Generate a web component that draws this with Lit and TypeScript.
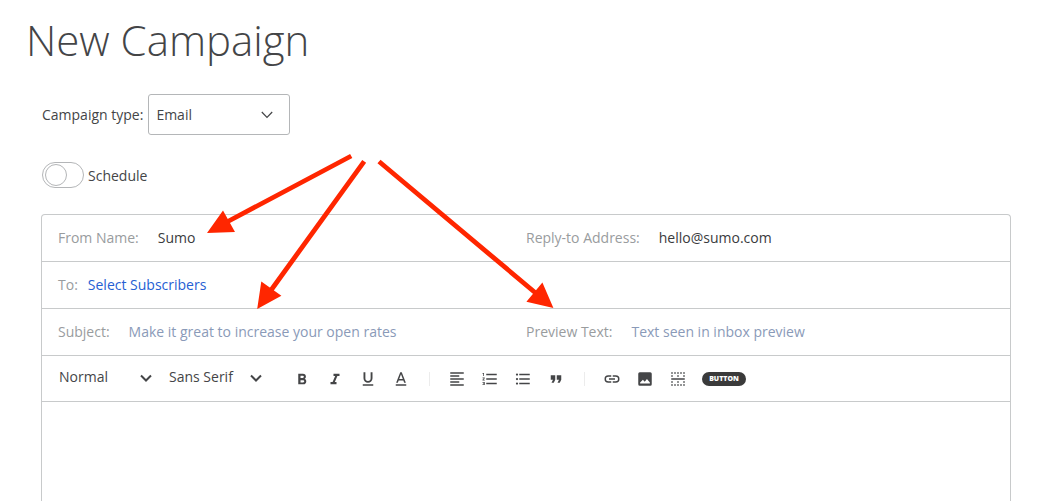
import { LitElement, html, svg, css } from "lit";
import { customElement, state } from "lit/decorators.js";

const glyphs: Record<string, unknown> = {
  Bold: svg`<path d="M15.6 11.8c1-.7 1.6-1.8 1.6-2.8a4 4 0 0 0-4-4H7v14h7c2.1 0 3.7-1.7 3.7-3.8 0-1.500-.8-2.800-2.100-3.400zM10 7.500h3a1.500 1.500 0 0 1 0 3h-3v-3zm3.500 9H10v-3h3.500a1.500 1.500 0 0 1 0 3z"/>`,
  Italic: svg`<path d="M10 5v3h2.200l-3.400 8H6v3h8v-3h-2.200l3.400-8H18V5z"/>`,
  Underline: svg`<path d="M12 17a6 6 0 0 0 6-6V3h-2.500v8a3.500 3.500 0 0 1-7 0V3H6v8a6 6 0 0 0 6 6zm-7 2v2h14v-2H5z"/>`,
  "Text colour": svg`<path d="M5 19v2h14v-2H5z"/><path d="M11 3 5.500 17h2.250l1.120-3h6.250l1.120 3h2.250L13 3h-2zm-1.380 9L12 5.670 14.380 12H9.620z"/>`,
  "Align left": svg`<path d="M15 15H3v2h12v-2zm0-8H3v2h12V7zM3 13h18v-2H3v2zm0 8h18v-2H3v2zM3 3v2h18V3H3z"/>`,
  "Numbered list": svg`<path d="M2 17h2v.5H3v1h1v.5H2v1h3v-4H2v1zm1-9h1V4H2v1h1v3zm-1 3h1.800L2 13.100v.9h3v-1H3.200L5 10.900V10H2v1zm5-6v2h14V5H7zm0 14h14v-2H7v2zm0-6h14v-2H7v2z"/>`,
  "Bulleted list": svg`<path d="M4 10.500a1.500 1.500 0 1 0 0 3 1.500 1.500 0 0 0 0-3zm0-6a1.500 1.500 0 1 0 0 3 1.500 1.500 0 0 0 0-3zm0 12a1.500 1.500 0 1 0 0 3 1.500 1.500 0 0 0 0-3zM7 19h14v-2H7v2zm0-6h14v-2H7v2zm0-8v2h14V5H7z"/>`,
  Quote: svg`<path d="M6 17h3l2-4V7H5v6h3zm8 0h3l2-4V7h-6v6h3z"/>`,
  Link: svg`<path d="M3.900 12A3.100 3.100 0 0 1 7 8.900h4V7H7a5 5 0 0 0 0 10h4v-1.900H7A3.100 3.100 0 0 1 3.900 12zM8 13h8v-2H8v2zm9-6h-4v1.900h4a3.100 3.100 0 0 1 0 6.200h-4V17h4a5 5 0 0 0 0-10z"/>`,
  Image: svg`<path fill-rule="evenodd" d="M5 3h14a2 2 0 0 1 2 2v14a2 2 0 0 1-2 2H5a2 2 0 0 1-2-2V5a2 2 0 0 1 2-2zM5.500 18h13v-1.500L14.600 12l-3 3.500L9.200 13l-3.700 3.700z"/>`,
  Divider: svg`<path d="M3 11h18v2H3z"/><path d="M3 4h18M3 20h18" fill="none" stroke="currentColor" stroke-width="2" stroke-dasharray="2 2"/><path d="M3 8h18M3 16h18" fill="none" stroke="currentColor" stroke-width="2" stroke-dasharray="2 6"/>`,
};

const groups = [
  ["Bold", "Italic", "Underline", "Text colour"],
  ["Align left", "Numbered list", "Bulleted list", "Quote"],
  ["Link", "Image", "Divider"],
];

@customElement("app-root")
export class AppRoot extends LitElement {
  @state() private scheduled = false;

  static styles = css`
    * { box-sizing: border-box; }
    :host {
      position: relative;
      display: flex;
      flex-direction: column;
      height: 100vh;
      overflow: hidden;
      background: #fff;
      color: #444547;
      font: 14px/20px "Open Sans", sans-serif;
    }
    h1 {
      margin: 0;
      padding: 12px 26px 26px;
      font-size: 42px;
      font-weight: 300;
      line-height: 56px;
    }
    input, select, button { font: inherit; color: inherit; }
    .option { display: flex; align-items: center; gap: 5px; padding: 0 42px; }
    .schedule { gap: 4px; padding-top: 27px; padding-bottom: 26px; }
    .schedule label { line-height: 22px; padding-top: 2px; }
    .pick { display: grid; align-items: center; }
    .pick select, .pick svg { grid-area: 1 / 1; }
    .pick select {
      appearance: none;
      width: 100%;
      margin: 0;
      padding: 0;
      border: 0;
      background: none;
    }
    .pick svg {
      justify-self: end;
      pointer-events: none;
      fill: none;
      stroke: currentColor;
    }
    .boxed { width: 142px; }
    .boxed select {
      height: 41px;
      padding: 0 7px;
      border: 1px solid #b4b6b8;
      border-radius: 3px;
    }
    .boxed svg { margin-right: 16px; }
    .toggle {
      appearance: none;
      display: flex;
      align-items: center;
      width: 42px;
      height: 26px;
      margin: 0;
      padding: 0 2px;
      border: 1px solid #b4b6b8;
      border-radius: 13px;
    }
    .toggle::before {
      content: "";
      width: 20px;
      height: 20px;
      border: 1px solid #b4b6b8;
      border-radius: 50%;
    }
    .toggle:checked { justify-content: flex-end; background: #dbe7fb; }
    .composer {
      flex: 1;
      display: flex;
      flex-direction: column;
      margin: 0 39px 0 41px;
      border: 1px solid #c8cacb;
      border-bottom: 0;
      border-radius: 4px 4px 0 0;
    }
    .row {
      display: grid;
      grid-template-columns: 1fr 1fr;
      align-items: center;
      height: 47px;
      padding: 0 16px;
      border-bottom: 1px solid #c8cacb;
    }
    .field { display: flex; gap: 19px; color: #999c9e; }
    .near { gap: 10px; }
    .field input {
      flex: 1;
      min-width: 0;
      padding: 0;
      border: 0;
      color: #3a3b3d;
      background: none;
      outline: none;
    }
    .field input::placeholder { color: #8a9ab8; opacity: 1; }
    a { color: #2660d3; text-decoration: none; }
    .bar {
      display: flex;
      align-items: center;
      height: 46px;
      padding: 0 17px;
      border-bottom: 1px solid #c8cacb;
    }
    .bar .pick { width: 94px; margin-right: 16px; padding-bottom: 4px; }
    .bar .pick svg { margin-top: 2px; }
    .bar .font { margin-right: 30px; }
    .group { display: flex; gap: 15px; }
    .group + .group { margin-left: 19px; padding-left: 19px; background: linear-gradient(#ececec, #ececec) left / 1px 14px no-repeat; }
    .tool {
      display: flex;
      width: 18px;
      height: 18px;
      padding: 0;
      border: 0;
      background: none;
    }
    .tool svg { width: 18px; height: 18px; fill: currentColor; }
    .pill {
      width: 44px;
      height: 14px;
      margin-left: 15px;
      padding: 0;
      border: 0;
      border-radius: 7px;
      background: #3a3a3a;
      color: #fff;
      font-size: 7px;
      font-weight: 800;
      line-height: 14px;
    }
    .body { flex: 1; min-height: 80px; outline: none; padding: 12px 16px; }
    .arrows {
      position: absolute;
      top: 0;
      left: 0;
      pointer-events: none;
      fill: #ff2600;
      stroke: #ff2600;
    }
  `;

  private thick() {
    return html`<svg width="14" height="10" viewBox="0 0 14 10" stroke-width="2" aria-hidden="true"><path d="M2 2.500 7 7.500 12 2.500"/></svg>`;
  }

  render() {
    return html`
      <h1>New Campaign</h1>
      <div class="option">
        <label for="type">Campaign type:</label>
        <span class="pick boxed">
          <select id="type"><option>Email</option></select>
          <svg width="14" height="10" viewBox="0 0 14 10" stroke-width="1.200" aria-hidden="true"><path d="M1.800 2 7 7.500 12.200 2"/></svg>
        </span>
      </div>
      <div class="option schedule">
        <input id="schedule" class="toggle" type="checkbox" role="switch" .checked=${this.scheduled}
          @change=${(e: Event) => (this.scheduled = (e.target as HTMLInputElement).checked)} />
        <label for="schedule">Schedule</label>
      </div>
      <div class="composer">
        <div class="row">
          <div class="field"><label for="from">From Name:</label><input id="from" value="Sumo" /></div>
          <div class="field"><label for="reply">Reply-to Address:</label><input id="reply" type="email" value="hello@sumo.com" /></div>
        </div>
        <div class="row">
          <div class="field near"><span>To:</span><a href="#subscribers">Select Subscribers</a></div>
        </div>
        <div class="row">
          <div class="field"><label for="subject">Subject:</label><input id="subject" placeholder="Make it great to increase your open rates" /></div>
          <div class="field"><label for="preview">Preview Text:</label><input id="preview" placeholder="Text seen in inbox preview" /></div>
        </div>
        <div class="bar">
          <span class="pick"><select aria-label="Text size"><option>Normal</option></select>${this.thick()}</span>
          <span class="pick font"><select aria-label="Font"><option>Sans Serif</option></select>${this.thick()}</span>
          ${groups.map((names) => html`<div class="group">
            ${names.map((n) => html`<button class="tool" type="button" aria-label=${n}><svg viewBox="0 0 24 24" aria-hidden="true">${glyphs[n]}</svg></button>`)}
          </div>`)}
          <button class="pill" type="button">BUTTON</button>
        </div>
        <div class="body" role="textbox" aria-label="Message" contenteditable="true"></div>
      </div>
      <svg class="arrows" width="600" height="320" aria-hidden="true">
        <path stroke-width="4.800" d="M351.200 156 225 223M364.200 161.300 269 293M379 161.500 538 295"/>
        <path stroke="none" d="M207 233 223 210.500 235 232zM257.200 309 261.300 281.500 281.400 295.800zM553.400 308 542.400 282.500 526.400 301.800z"/>
      </svg>
    `;
  }
}
